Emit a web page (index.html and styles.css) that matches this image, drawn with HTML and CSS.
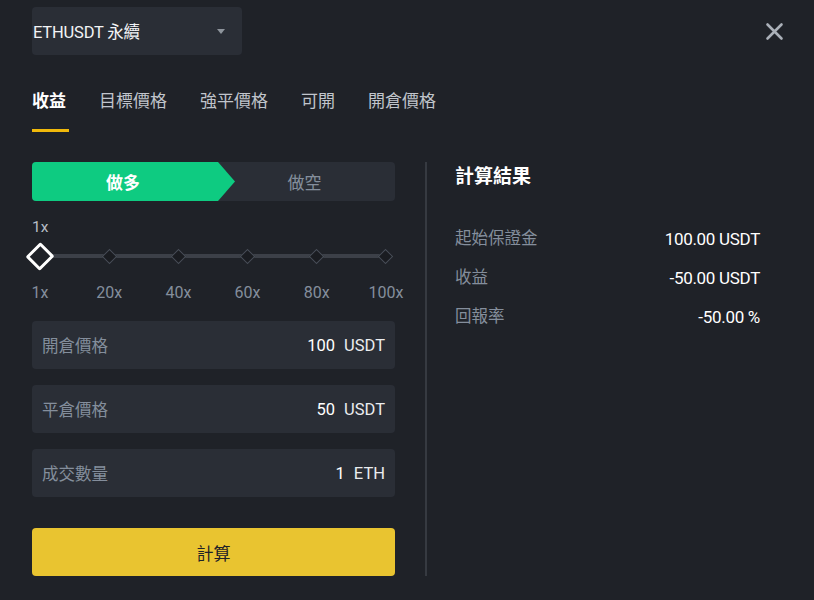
FILE: index.html
```html
<!DOCTYPE html>
<html lang="zh-Hant">
<head>
<meta charset="utf-8">
<title>合約計算器</title>
<link rel="stylesheet" href="styles.css">
</head>
<body>
<div class="page">
  <header class="header">
    <div class="select">
      <span class="select-text">ETHUSDT 永續</span>
      <span class="caret"></span>
    </div>
    <button class="close" aria-label="關閉">
      <svg width="19" height="19" viewBox="0 0 19 19"><path d="M2.5 2.5 L16.5 16.5 M16.5 2.5 L2.5 16.5" stroke="#aab0b8" stroke-width="2.6" stroke-linecap="round"/></svg>
    </button>
  </header>

  <nav class="tabs">
    <span class="tab active">收益</span>
    <span class="tab">目標價格</span>
    <span class="tab">強平價格</span>
    <span class="tab">可開</span>
    <span class="tab">開倉價格</span>
  </nav>

  <main class="content">
    <section class="left">
      <div class="side-toggle">
        <span class="side long">做多</span>
        <span class="side short">做空</span>
      </div>

      <div class="lev-label">1x</div>
      <div class="slider">
        <div class="ticks">
          <span class="tick current"></span>
          <span class="tick"></span>
          <span class="tick"></span>
          <span class="tick"></span>
          <span class="tick"></span>
          <span class="tick"></span>
        </div>
      </div>
      <div class="marks">
        <span>1x</span><span>20x</span><span>40x</span><span>60x</span><span>80x</span><span>100x</span>
      </div>

      <div class="fields">
        <div class="field"><span class="f-label">開倉價格</span><span class="f-value">100<span class="unit">USDT</span></span></div>
        <div class="field"><span class="f-label">平倉價格</span><span class="f-value">50<span class="unit">USDT</span></span></div>
        <div class="field"><span class="f-label">成交數量</span><span class="f-value">1<span class="unit">ETH</span></span></div>
      </div>

      <button class="calc">計算</button>
    </section>

    <div class="divider"></div>

    <section class="right">
      <h2 class="r-title">計算結果</h2>
      <div class="r-rows">
        <div class="r-row"><span class="r-label">起始保證金</span><span class="r-value">100.00 USDT</span></div>
        <div class="r-row"><span class="r-label">收益</span><span class="r-value">-50.00 USDT</span></div>
        <div class="r-row"><span class="r-label">回報率</span><span class="r-value">-50.00 %</span></div>
      </div>
    </section>
  </main>
</div>
</body>
</html>
```

FILE: styles.css
```css
* { box-sizing: border-box; }

html, body {
  margin: 0;
  padding: 0;
  background: #1f2228;
  height: 100%;
}

body {
  font-family: Roboto, "Noto Sans CJK TC", sans-serif;
  color: #eaecef;
  overflow: hidden;
}

.page {
  padding: 7px 30px 0 32px;
}

.header {
  display: flex;
  justify-content: space-between;
  align-items: center;
  height: 48px;
}

.select {
  width: 210px;
  height: 48px;
  background: #2a2e36;
  border-radius: 4px;
  display: flex;
  align-items: center;
  justify-content: space-between;
  padding: 0 17px 0 1px;
}

.select-text {
  font-size: 16.5px;
  color: #f2f3f5;
  letter-spacing: -0.2px;
}

.caret {
  width: 0;
  height: 0;
  border-left: 4px solid transparent;
  border-right: 4px solid transparent;
  border-top: 5px solid #8e949c;
}

.close {
  background: none;
  border: 0;
  padding: 0;
  width: 19px;
  height: 19px;
  display: flex;
  cursor: pointer;
}

.tabs {
  display: flex;
  gap: 33px;
  margin-top: 34px;
}

.tab {
  position: relative;
  font-size: 17px;
  line-height: 24px;
  padding-bottom: 19px;
  color: #c1c5cc;
}

.tab.active {
  color: #ffffff;
  font-weight: 700;
}

.tab.active::after {
  content: "";
  position: absolute;
  left: 0;
  bottom: 0;
  width: 37px;
  height: 3px;
  background: #f0b90b;
}

.content {
  display: flex;
  margin-top: 30px;
}

.left {
  width: 363px;
}

.side-toggle {
  display: flex;
  height: 39px;
  background: #2a2e36;
  border-radius: 4px;
  font-size: 17px;
}

.side {
  display: flex;
  align-items: center;
  justify-content: center;
}

.long {
  width: 203px;
  padding-right: 21px;
  background: #0ecb81;
  color: #ffffff;
  font-weight: 700;
  border-radius: 4px 0 0 4px;
  clip-path: polygon(0 0, calc(100% - 17px) 0, 100% 50%, calc(100% - 17px) 100%, 0 100%);
}

.short {
  flex: 1;
  margin-left: -21px;
  color: #848e9c;
}

.lev-label {
  margin-top: 16px;
  font-size: 15.5px;
  line-height: 20px;
  color: #b7bdc6;
}

.slider {
  position: relative;
  margin: 6px -1px 0 -2px;
  height: 26px;
}

.slider::before {
  content: "";
  position: absolute;
  left: 10px;
  right: 10px;
  top: 11px;
  height: 4px;
  background: #3c4048;
}

.ticks {
  position: relative;
  height: 26px;
  display: flex;
  justify-content: space-between;
  align-items: center;
}

.tick {
  width: 20px;
  height: 20px;
  display: flex;
  align-items: center;
  justify-content: center;
}

.tick::before {
  content: "";
  width: 9px;
  height: 9px;
  background: #1a1c21;
  border: 1.5px solid #474d57;
  transform: rotate(45deg);
}

.tick.current::before {
  width: 15px;
  height: 15px;
  border: 3px solid #ffffff;
  background: #1f2228;
  border-radius: 2px;
}

.marks {
  display: flex;
  justify-content: space-between;
  margin: 14px -11px 0 -12px;
  font-size: 16px;
  line-height: 20px;
  color: #848e9c;
}

.marks span {
  width: 40px;
  text-align: center;
}

.fields {
  margin-top: 18px;
  display: flex;
  flex-direction: column;
  gap: 16px;
}

.field {
  height: 48px;
  background: #2a2e36;
  border-radius: 4px;
  display: flex;
  align-items: center;
  justify-content: space-between;
  padding: 0 10px;
  font-size: 16.5px;
}

.f-label {
  color: #848e9c;
}

.f-value {
  color: #ffffff;
}

.unit {
  margin-left: 9px;
  color: #eaecef;
}

.calc {
  margin-top: 31px;
  width: 100%;
  height: 48px;
  border: 0;
  border-radius: 4px;
  background: #e9c430;
  color: #1f2228;
  font-family: Roboto, "Noto Sans CJK TC", sans-serif;
  font-size: 17px;
  cursor: pointer;
}

.divider {
  width: 2px;
  margin-left: 30px;
  background: #363a41;
}

.right {
  margin-left: 28px;
  width: 305px;
}

.r-title {
  margin: 0;
  font-size: 19px;
  line-height: 30px;
  font-weight: 700;
  color: #ffffff;
}

.r-rows {
  margin-top: 35px;
  display: flex;
  flex-direction: column;
  gap: 15px;
}

.r-row {
  display: flex;
  justify-content: space-between;
  font-size: 16.5px;
  line-height: 24px;
}

.r-label {
  color: #848e9c;
}

.r-value {
  color: #ffffff;
  font-size: 17px;
  letter-spacing: -0.3px;
}
```
